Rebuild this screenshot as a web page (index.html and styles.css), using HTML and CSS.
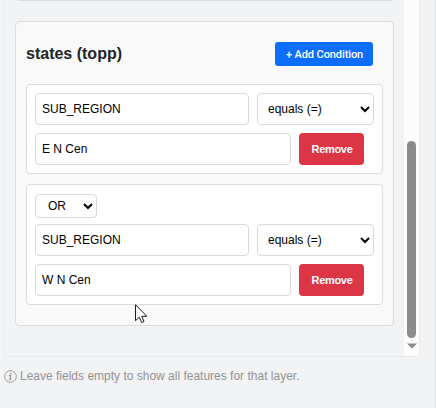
FILE: index.html
```html
<!DOCTYPE html>
<html lang="en">
<head>
<meta charset="utf-8">
<title>Layer filters</title>
<link rel="stylesheet" href="styles.css">
</head>
<body>
<main class="panel">
  <div class="scroller">
    <div class="layers">
      <section class="layer layer-previous"></section>
      <section class="layer">
        <header class="layer-header">
          <h2>states (topp)</h2>
          <button class="add">+ Add Condition</button>
        </header>
        <div class="condition">
          <div class="row">
            <input class="field" value="SUB_REGION">
            <select class="operator"><option>equals (=)</option></select>
          </div>
          <div class="row">
            <input class="value" value="E N Cen">
            <button class="remove">Remove</button>
          </div>
        </div>
        <div class="condition">
          <select class="logic"><option>OR</option></select>
          <div class="row">
            <input class="field" value="SUB_REGION">
            <select class="operator"><option>equals (=)</option></select>
          </div>
          <div class="row">
            <input class="value" value="W N Cen">
            <button class="remove">Remove</button>
          </div>
        </div>
      </section>
    </div>
    <div class="scrollbar">
      <div class="thumb"></div>
      <svg class="arrow" width="10" height="6" viewBox="0 0 10 6"><path d="M0 .5h10L5 5.5z" fill="#8b8b8b"/></svg>
    </div>
  </div>
  <p class="hint">
    <svg width="13" height="13" viewBox="0 0 13 13" fill="none" stroke="#939393"><circle cx="6.5" cy="6.5" r="5.8" stroke-width=".9"/><path d="M5 5.3h1.7L5.9 9.3h1.4M6.9 2.9v1.3" stroke-width="1.2"/></svg>
    <span>Leave fields empty to show all features for that layer.</span>
  </p>
</main>
<svg class="cursor" width="13" height="20" viewBox="0 0 13 20"><path d="M.5.7v16l3.7-3.5 2.5 5.3 2.3-1-2.3-5.2h5.1z" fill="#fff" stroke="#1c1826"/></svg>
</body>
</html>
```
FILE: styles.css
```css
* { box-sizing: border-box; }

body {
  margin: 0;
  height: 408px;
  overflow: hidden;
  background: #f2f3f5;
  font-family: "Liberation Sans", Arial, sans-serif;
}

.panel {
  height: 408px;
  padding-left: 4px;
  border-right: 1px solid #dcdddf;
}

.scroller {
  display: flex;
  width: 416px;
  height: 357px;
  overflow: hidden;
  border: 1px solid #e9eaec;
  border-top: 0;
}

.layers { width: 399px; padding: 0 10px; }

.layer {
  height: 305px;
  padding: 10px;
  border: 1px solid #dadbdd;
  border-radius: 4px;
  background: #f9f9f9;
}

.layer-previous { height: 22px; margin: -21px 0 20px; }

.layer-header {
  display: flex;
  align-items: center;
  justify-content: space-between;
  height: 44px;
  margin-bottom: 8px;
  padding-right: 10px;
}

h2 { margin: 0; color: #212529; font-size: 16px; line-height: 20px; }

button {
  padding: 0;
  border: 0;
  border-radius: 4px;
  color: #fff;
  font: bold 11px "Liberation Sans", Arial, sans-serif;
}

.add {
  width: 98px;
  height: 24px;
  padding-left: 1px;
  border-radius: 3px;
  background: #0d6efd;
  font-family: Roboto, sans-serif;
  font-weight: 500;
  letter-spacing: -0.1px;
}

.remove {
  width: 65px;
  height: 32px;
  padding-left: 1px;
  background: #dc3545;
  letter-spacing: -0.3px;
}

.condition {
  margin-bottom: 10px;
  padding: 8px;
  border: 1px solid #dcdcde;
  border-radius: 4px;
  background: #fff;
}

.row { display: flex; gap: 8px; }
.row + .row { margin-top: 8px; }

input, select {
  height: 32px;
  margin: 0;
  border: 1px solid #d9d9dc;
  border-radius: 4px;
  background: #fff;
  color: #000;
  font: 12px "Liberation Sans", Arial, sans-serif;
}

input { padding: 0 7px 0 6px; }
.field { width: 214px; }
.value { width: 256px; }
.operator { width: 117px; padding: 0 0 0 6px; }

.logic {
  display: block;
  width: 62px;
  height: 24px;
  margin: 1px 0 6px;
  padding: 0 0 0 8px;
}

.scrollbar {
  display: flex;
  flex-direction: column;
  align-items: center;
  width: 15px;
  height: 356px;
  background: #fcfcfc;
}

.thumb {
  width: 9px;
  height: 197px;
  margin-top: 141px;
  border-radius: 5px;
  background: #8b8b8b;
}

.arrow { margin-top: 5px; }

.hint {
  display: flex;
  gap: 3px;
  align-items: center;
  margin: 12px 0 0;
  color: #939393;
  font-size: 12px;
  line-height: 15px;
}

.cursor { position: absolute; left: 135px; top: 304px; }
```
